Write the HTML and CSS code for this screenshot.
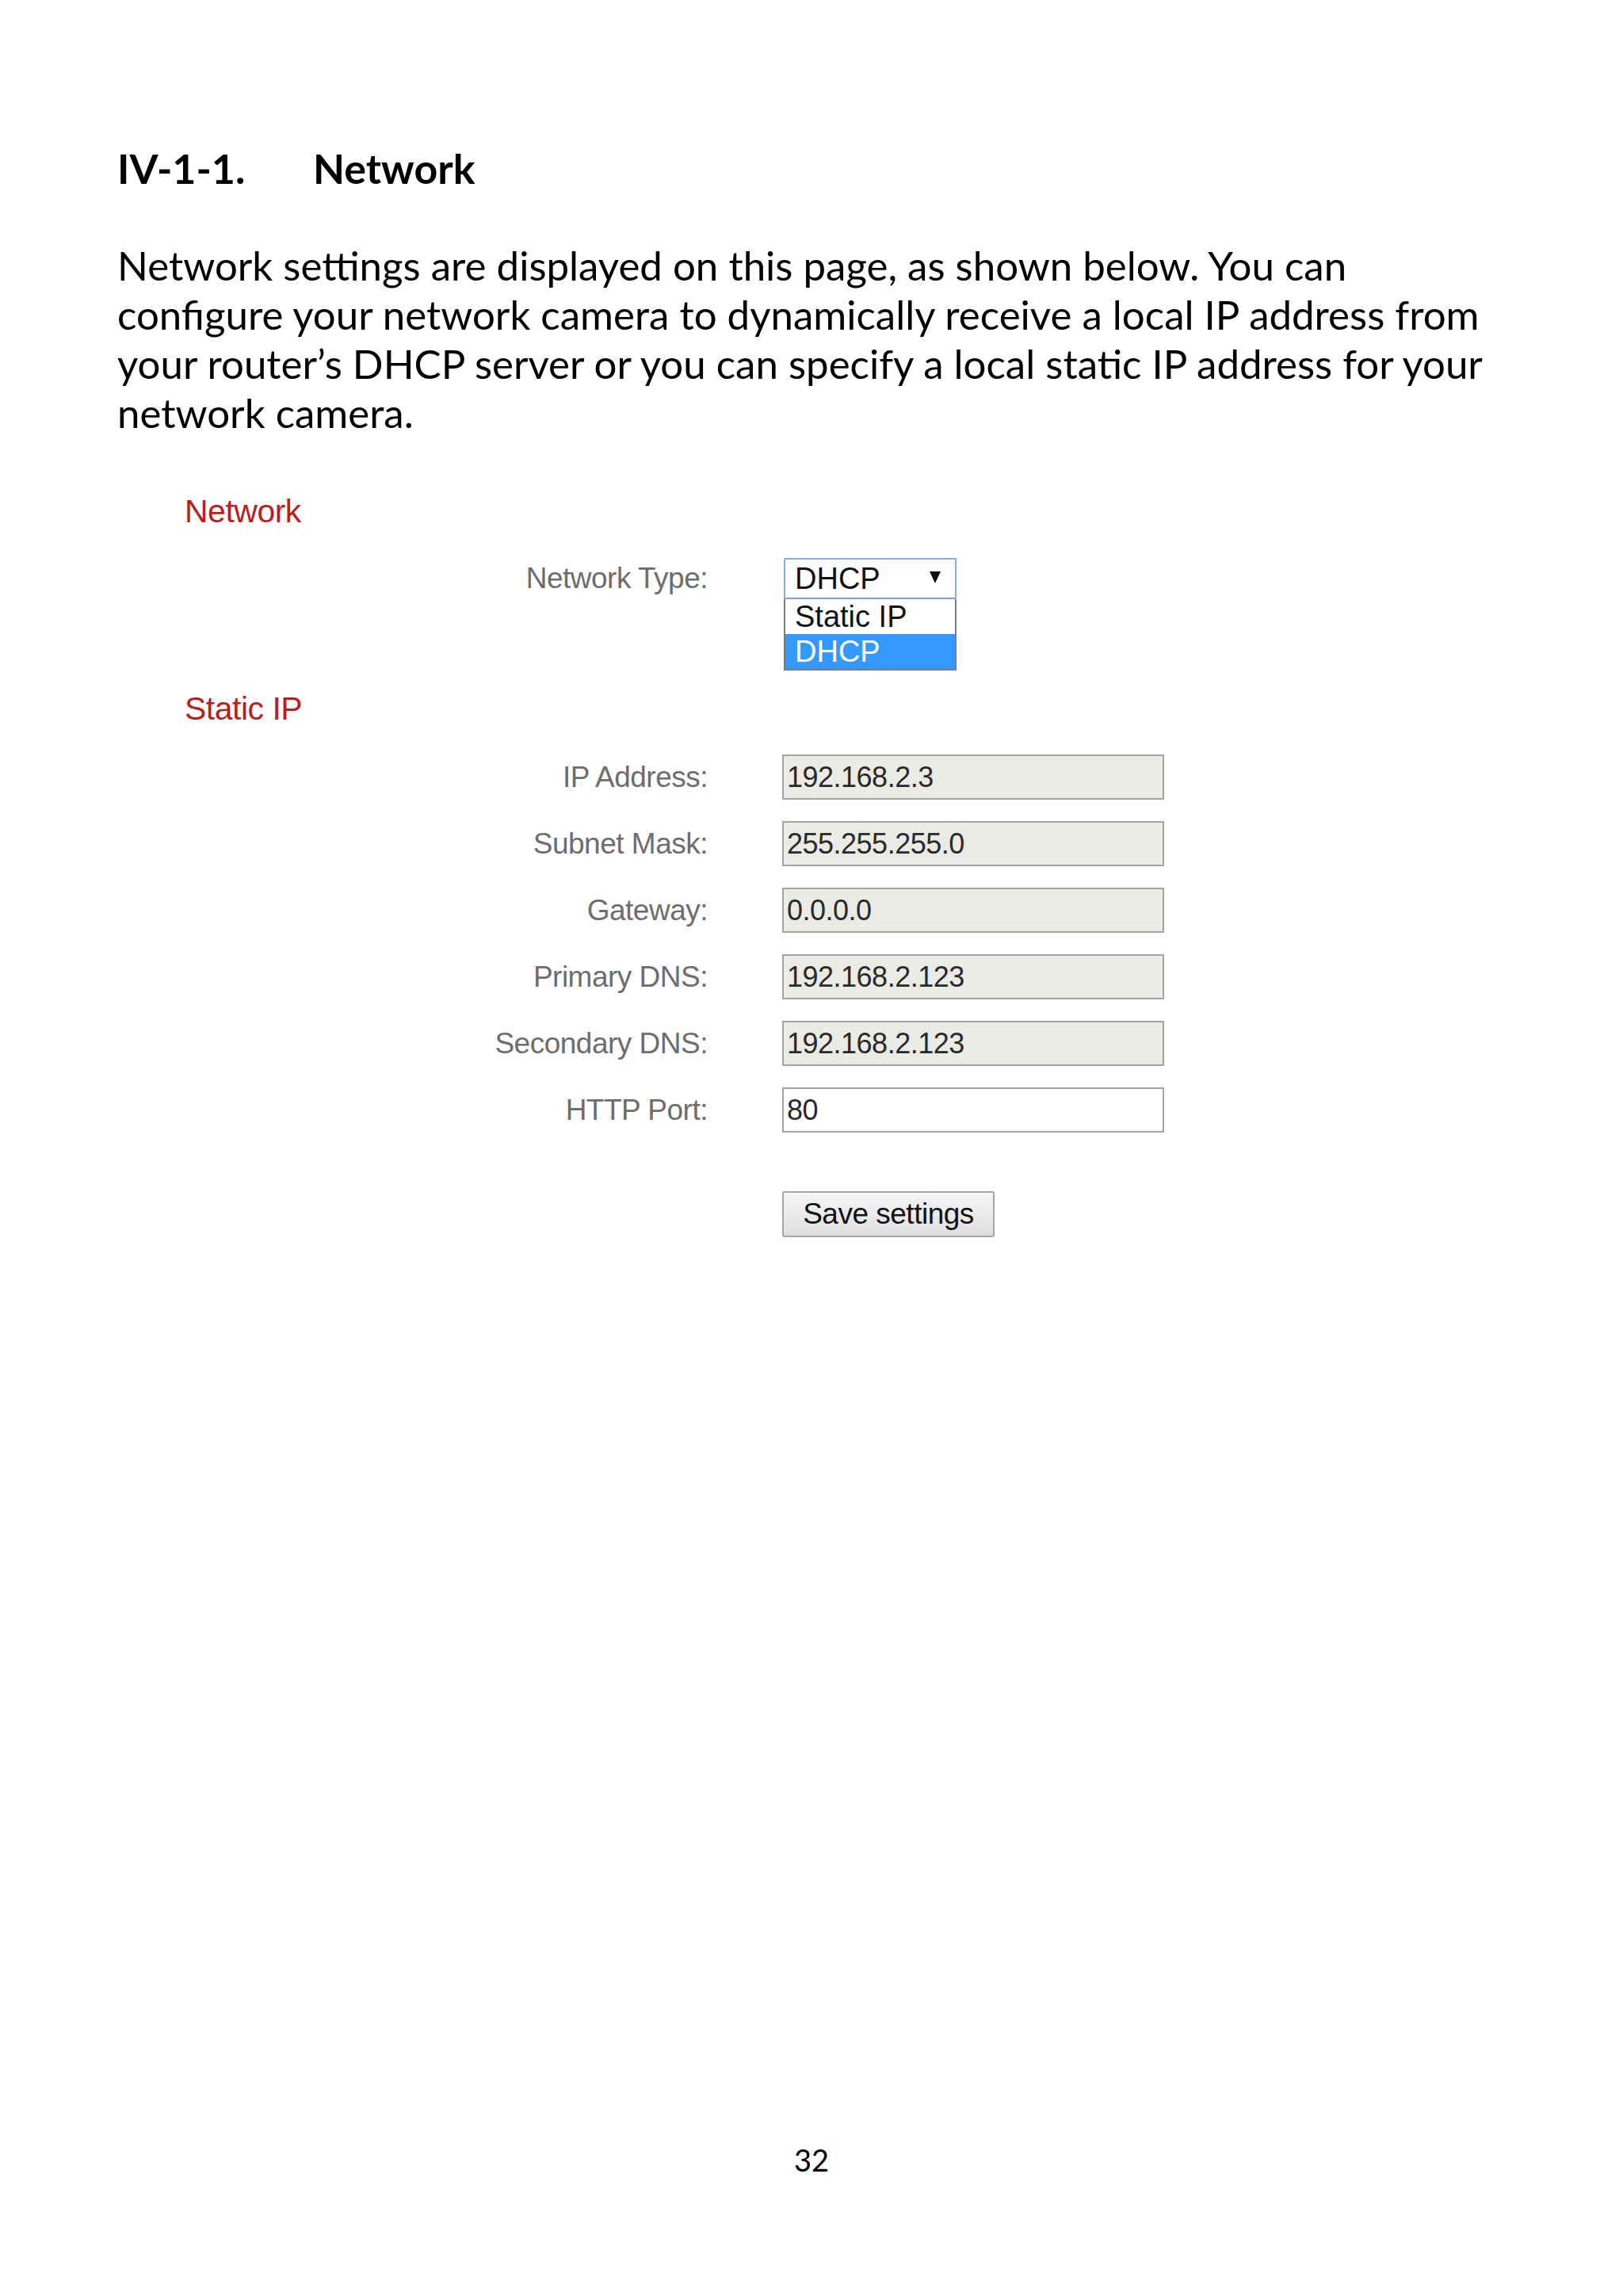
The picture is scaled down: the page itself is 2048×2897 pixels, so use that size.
FILE: index.html
```html
<!DOCTYPE html>
<html lang="en">
<head>
<meta charset="utf-8">
<title>IV-1-1. Network</title>
<link rel="stylesheet" href="styles.css">
</head>
<body>
<div class="page">
  <h2 class="heading"><span class="heading-num">IV-1-1.</span><span class="heading-title">Network</span></h2>
  <p class="body-text">Network settings are displayed on this page, as shown below. You can<br>configure your network camera to dynamically receive a local IP address from<br>your router’s DHCP server or you can specify a local static IP address for your<br>network camera.</p>

  <div class="shot">
    <div class="section-title">Network</div>
    <div class="row row-type">
      <div class="label">Network Type:</div>
      <div class="select-wrap">
        <div class="select"><span>DHCP</span><span class="arrow"></span></div>
        <div class="list">
          <div class="opt">Static IP</div>
          <div class="opt opt-sel">DHCP</div>
        </div>
      </div>
    </div>

    <div class="section-title section-static">Static IP</div>
    <div class="fields">
      <div class="row"><div class="label">IP Address:</div><input class="field field-dis" type="text" value="192.168.2.3" readonly></div>
      <div class="row"><div class="label">Subnet Mask:</div><input class="field field-dis" type="text" value="255.255.255.0" readonly></div>
      <div class="row"><div class="label">Gateway:</div><input class="field field-dis" type="text" value="0.0.0.0" readonly></div>
      <div class="row"><div class="label">Primary DNS:</div><input class="field field-dis" type="text" value="192.168.2.123" readonly></div>
      <div class="row"><div class="label">Secondary DNS:</div><input class="field field-dis" type="text" value="192.168.2.123" readonly></div>
      <div class="row"><div class="label">HTTP Port:</div><input class="field" type="text" value="80" readonly></div>
    </div>
    <div class="row row-btn"><div class="label"></div><button class="btn" type="button">Save settings</button></div>
  </div>

  <div class="page-num">32</div>
</div>
</body>
</html>
```

FILE: styles.css
```css
html, body {
  margin: 0;
  padding: 0;
  background: #ffffff;
}

.page {
  position: relative;
  width: 2048px;
  height: 2897px;
  box-sizing: border-box;
  padding: 179px 0 0 148px;
  font-family: Lato, "Open Sans", sans-serif;
  color: #000;
}

.heading {
  margin: 0;
  display: flex;
  font-size: 52px;
  line-height: 66px;
  font-weight: 700;
}

.heading-num {
  width: 247px;
}

.body-text {
  margin: 59px 0 0 0;
  font-size: 51px;
  line-height: 62px;
  letter-spacing: 0;
  white-space: nowrap;
}

.shot {
  margin: 69px 0 0 85px;
  font-family: "Liberation Sans", Arial, sans-serif;
}

.section-title {
  font-size: 41px;
  line-height: 48px;
  color: #bb1d1d;
  letter-spacing: -0.5px;
}

.row {
  display: grid;
  grid-template-columns: 660px 482px;
  column-gap: 94px;
  align-items: center;
}

.label {
  text-align: right;
  font-size: 37px;
  color: #6d6d6d;
  letter-spacing: -0.5px;
}

.row-type {
  margin-top: 35px;
  align-items: start;
}

.row-type .label {
  line-height: 52px;
}

.select-wrap {
  width: 218px;
  margin-left: 2px;
}

.select {
  height: 52px;
  box-sizing: border-box;
  border: 2px solid #86aee0;
  border-bottom-color: #7f9cc4;
  border-radius: 2px;
  background: #fff;
  display: flex;
  align-items: center;
  justify-content: space-between;
  padding: 0 18px 0 12px;
  font-size: 38px;
  color: #111;
}

.arrow {
  width: 0;
  height: 0;
  border-left: 7px solid transparent;
  border-right: 7px solid transparent;
  border-top: 15px solid #111;
  margin-top: -4px;
}

.list {
  border: 2px solid #7d7d7d;
  border-top: none;
  background: #fff;
}

.opt {
  height: 44px;
  line-height: 44px;
  padding-left: 12px;
  font-size: 38px;
  color: #111;
}

.opt-sel {
  background: #3399ff;
  color: #fff;
}

.section-static {
  margin-top: 24px;
}

.fields {
  margin-top: 34px;
  display: flex;
  flex-direction: column;
  gap: 27px;
}

.field {
  width: 482px;
  height: 57px;
  box-sizing: border-box;
  margin: 0;
  border: 2px solid #a3a3a3;
  background: #fff;
  padding: 0 0 0 4px;
  font-family: "Liberation Sans", Arial, sans-serif;
  font-size: 36px;
  color: #2a2a2a;
  letter-spacing: -0.5px;
  outline: none;
}

.field-dis {
  background: #ebebe6;
}

.row-btn {
  margin-top: 74px;
}

.btn {
  justify-self: start;
  width: 268px;
  height: 58px;
  box-sizing: border-box;
  margin: 0;
  border: 2px solid #a5a5a5;
  border-radius: 3px;
  background: linear-gradient(#f6f6f6, #dedede);
  font-family: "Liberation Sans", Arial, sans-serif;
  font-size: 37px;
  color: #111;
  padding: 0;
  letter-spacing: -0.5px;
}

.page-num {
  position: absolute;
  left: 0;
  right: 0;
  top: 2702px;
  text-align: center;
  font-size: 38px;
  line-height: 46px;
}
```
